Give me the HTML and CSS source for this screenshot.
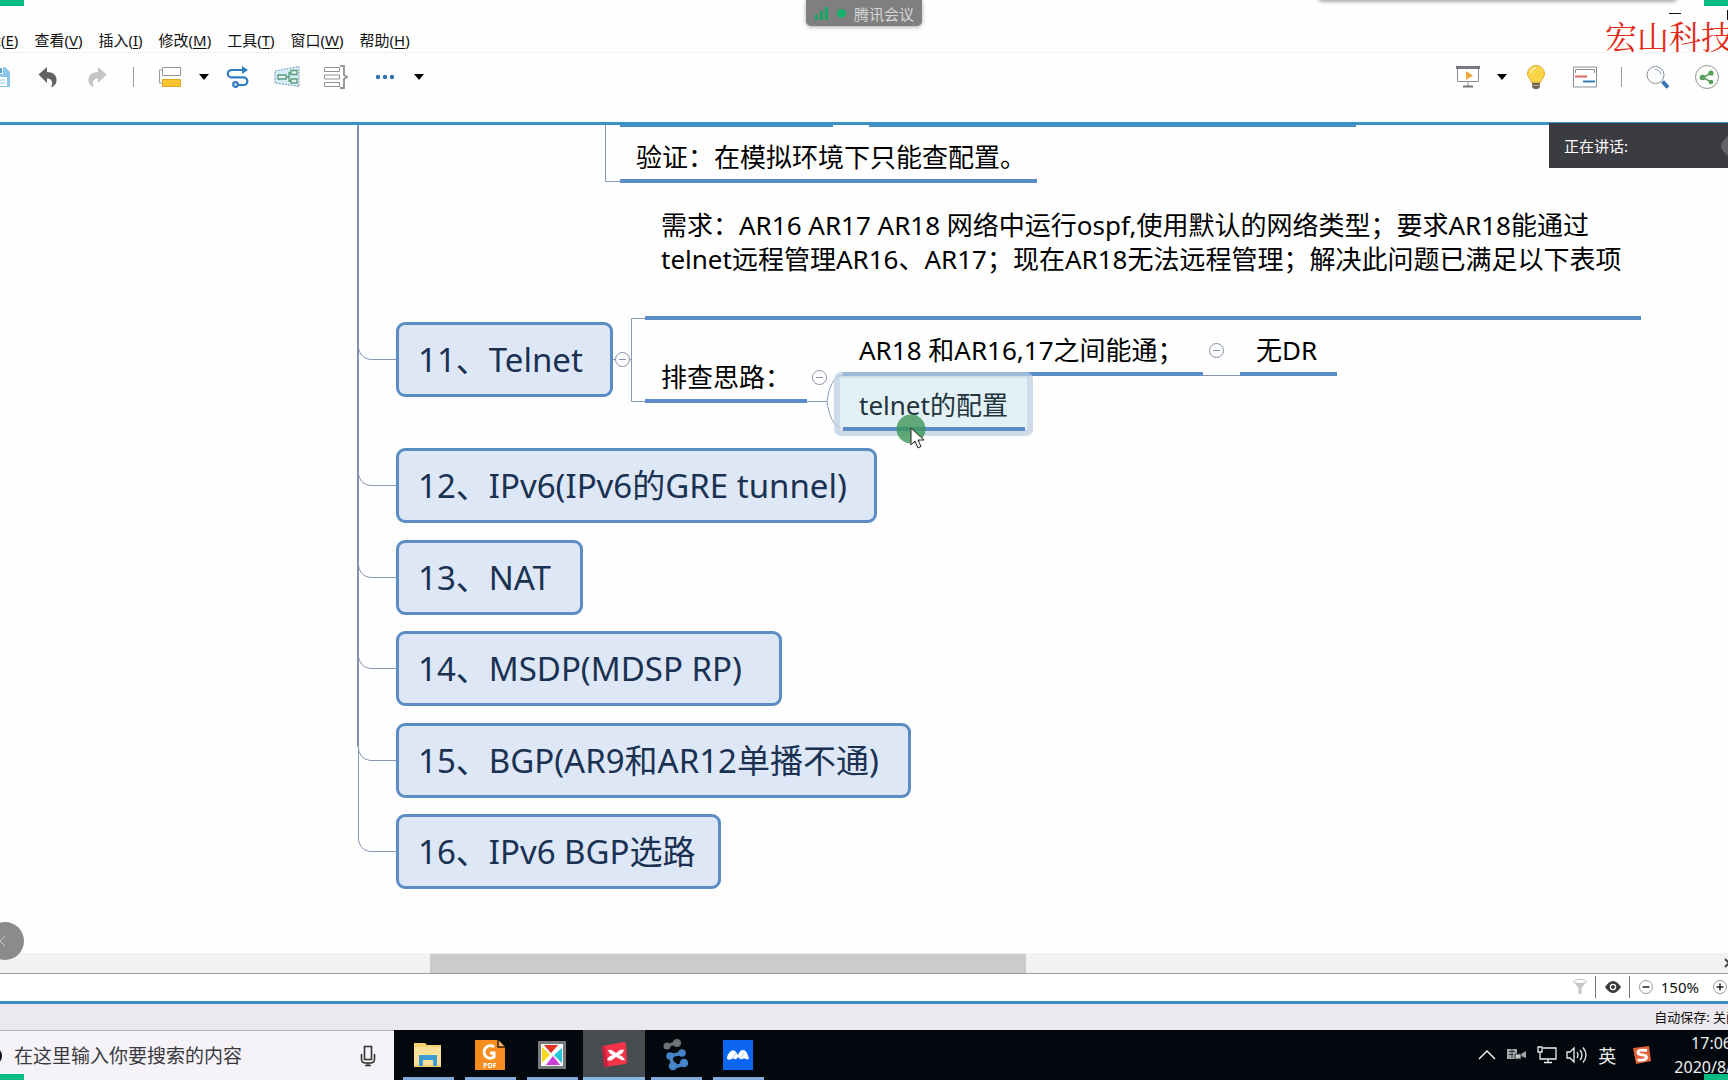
FILE: index.html
```
<!DOCTYPE html>
<html lang="zh-CN">
<head>
  <meta charset="UTF-8">
  <meta name="viewport" content="width=device-width, initial-scale=1.0">
  <title>思维导图</title>
  <link rel="stylesheet" href="styles.css">
</head>
<body>
  <header class="header">
    <nav class="menubar">
      <button>编辑(<u>E</u>)</button>
      <button>查看(<u>V</u>)</button>
      <button>插入(<u>I</u>)</button>
      <button>修改(<u>M</u>)</button>
      <button>工具(<u>T</u>)</button>
      <button>窗口(<u>W</u>)</button>
      <button>帮助(<u>H</u>)</button>
    </nav>

    <div class="toolbar">
      <div class="tools tools-left">
        <button class="tool" aria-label="保存">
          <svg width="24" height="24" viewBox="0 0 24 24"><path d="M1 2h17l5 5v15H1z" fill="#8ec5ec"/><path d="M6 2h10v7H6z" fill="#fff"/><path d="M13 3h2v5h-2z" fill="#5ea3d6"/><path d="M4 12h16v9H4z" fill="#fff"/><path d="M6 15h12M6 18h12" stroke="#8ec5ec"/></svg>
        </button>
        <button class="tool" aria-label="撤销">
          <svg width="24" height="24" viewBox="0 0 24 24"><path d="M2.500 9.500 11 2v5c7 0 10 4 9.500 9-.3 3-2.500 5.500-5.500 6.500 2-3.500 2-9-4-9V18z" fill="#626262"/></svg>
        </button>
        <button class="tool" aria-label="重做">
          <svg width="24" height="24" viewBox="0 0 24 24"><path d="M21.500 9.500 13 2v5C6 7 3 11 3.500 16c.3 3 2.500 5.500 5.500 6.500-2-3.500-2-9 4-9V18z" fill="#c4c4c4"/></svg>
        </button>
        <span class="tool-sep"></span>
        <button class="tool" aria-label="主题">
          <svg width="24" height="24" viewBox="0 0 24 24"><path d="M4.500 2.500h18v8h-18z" fill="#fff" stroke="#999"/><path d="M4 5H1.500v13H4" fill="none" stroke="#999"/><path d="M4.500 14.500h18v7h-18z" fill="#f9c531" stroke="#e0a820"/></svg>
        </button>
        <button class="tool-caret" aria-label="更多主题"><svg width="10" height="6" viewBox="0 0 10 6"><path d="M0 0h10L5 6z"/></svg></button>
        <button class="tool" aria-label="联系">
          <svg width="24" height="24" viewBox="0 0 24 24" fill="none" stroke="#2f7cc4" stroke-width="2.200"><path d="M17 5H5.500a3.700 3.700 0 0 0 0 7.400h12a3.700 3.700 0 0 1 0 7.600H12"/><circle cx="9.500" cy="19.500" r="2.300"/><path d="M16 1l6 4-6 4z" fill="#2f7cc4" stroke="none"/></svg>
        </button>
        <button class="tool" aria-label="外框">
          <svg width="26" height="24" viewBox="0 0 26 24"><path d="M1 6 25 1.500v20L1 18z" fill="#d7ecf6" stroke="#4f83ad" stroke-dasharray="1.500 1.500"/><g fill="#e7f5ec" stroke="#5a9a7c" stroke-width="1.300"><path d="M4 10h8v4H4zM17 5.500h6v4h-6zM17 14h6v4h-6z"/><path d="M12 12h3M17 7.500h-2v8.500h2" fill="none"/></g></svg>
        </button>
        <button class="tool" aria-label="概要">
          <svg width="26" height="24" viewBox="0 0 26 24" fill="none" stroke="#8d938d"><path d="M1.500 2.500h15v4h-15zM1.500 10h15v4h-15zM1.500 17.500h15v4h-15z"/><path d="M17 .8h4V10l3 2-3 2v9h-4" stroke-width="1.800"/></svg>
        </button>
        <button class="tool" aria-label="更多">
          <svg width="20" height="6" viewBox="0 0 20 6" fill="#3272b4"><circle cx="3" cy="3" r="2.200"/><circle cx="10" cy="3" r="2.200"/><circle cx="17" cy="3" r="2.200"/></svg>
        </button>
        <button class="tool-caret" aria-label="展开更多"><svg width="10" height="6" viewBox="0 0 10 6"><path d="M0 0h10L5 6z"/></svg></button>
      </div>

      <div class="tools tools-right">
        <button class="tool" aria-label="演示">
          <svg width="24" height="24" viewBox="0 0 24 24"><path d="M1.500 3v13.500h21V3M12 17v4" fill="#fff" stroke="#8b8b8b"/><path d="M0 1h24v3H0z" fill="#777780"/><path d="M7 21.500h10" stroke="#777" stroke-width="2"/><path d="M10 6l7 4.500-7 4.500z" fill="#efa93a"/></svg>
        </button>
        <button class="tool-caret" aria-label="演示选项"><svg width="10" height="6" viewBox="0 0 10 6"><path d="M0 0h10L5 6z"/></svg></button>
        <button class="tool" aria-label="头脑风暴">
          <svg width="20" height="26" viewBox="0 0 20 26"><path d="M10 1.500a8.500 8.500 0 0 0-8.500 8.500c0 4 3.500 5 4 8.500h9c.5-3.500 4-4.500 4-8.500A8.500 8.500 0 0 0 10 1.500z" fill="#f9d348" stroke="#dfae2c"/><path d="M5 9a5 5 0 0 1 5-5" stroke="#fff0a8" stroke-width="2" fill="none"/><path d="M6 19h8v4l-2 2H8l-2-2z" fill="#67645c"/><path d="M6 21.500h8" stroke="#bba66b"/></svg>
        </button>
        <button class="tool" aria-label="甘特图">
          <svg width="24" height="22" viewBox="0 0 24 22"><path d="M.5 1h23v20H.5z" fill="#fff" stroke="#8b8f94"/><path d="M2.500 7V3.500h19V7" fill="none" stroke="#8b8f94"/><path d="M2 10.500h12" stroke="#dc6767" stroke-width="2"/><path d="M10 15.500h12" stroke="#367eb6" stroke-width="2"/></svg>
        </button>
        <span class="tool-sep"></span>
        <button class="tool" aria-label="搜索">
          <svg width="24" height="24" viewBox="0 0 24 24"><circle cx="9.500" cy="10" r="8.500" fill="#fbfcfe" stroke="#8c9098"/><path d="M9 4.500c3.500 0 5.500 2 6 5" fill="none" stroke="#8fa7c0"/><path d="M16.500 16.500l5.500 6" stroke="#3575b5" stroke-width="4"/></svg>
        </button>
        <button class="tool" aria-label="分享">
          <svg width="24" height="24" viewBox="0 0 24 24"><circle cx="12" cy="12" r="11.500" fill="#fbfdfb" stroke="#8f9891"/><path d="M16 8 8 12.500l8 4.500" fill="none" stroke="#5a9e5e" stroke-width="1.500"/><g fill="#5a9e5e"><circle cx="16" cy="8" r="2.600"/><circle cx="7.500" cy="12.500" r="2.800"/><circle cx="16" cy="17" r="2.300"/></g></svg>
        </button>
      </div>
    </div>
  </header>

  <main class="canvas">
    <svg class="links" width="100%" height="100%" fill="none">
      <path class="trunk" d="M358 0V621"/>
      <g class="thin">
        <path d="M358.500 621v91"/>
        <path d="M358 220q1 13 12 14.500h28M358 346q1 13 12 14.500h28M358 438q1 13 12 14.500h28M358 529q1 13 12 14.500h28M358 621q1 13 12 14.500h28M358 712q1 13 12 14.500h28"/>
        <path d="M605.500 0v56.500H620"/>
        <path d="M613 234.500h18.500M645 193.500h-13.500v83H645"/>
        <path d="M807 276.500h20c2-14 6-25 16-27M827 276.500c2 14 6 25 16 27"/>
        <path d="M1203 250.500h37"/>
      </g>
      <path class="cut" d="M620 0h213M869 0h487"/>
    </svg>

    <div class="subtopic verify">验证：在模拟环境下只能查配置。</div>
    <div class="subtopic demand">需求：AR16 AR17 AR18 网络中运行ospf,使用默认的网络类型；要求AR18能通过<br>telnet远程管理AR16、AR17；现在AR18无法远程管理；解决此问题已满足以下表项</div>
    <div class="subtopic check">排查思路：</div>
    <div class="subtopic reach">AR18 和AR16,17之间能通；</div>
    <div class="subtopic nodr">无DR</div>
    <div class="selection"></div>
    <div class="subtopic config">telnet的配置</div>

    <div class="topic t11">11、Telnet</div>
    <div class="topic t12">12、IPv6(IPv6的GRE tunnel)</div>
    <div class="topic t13">13、NAT</div>
    <div class="topic t14">14、MSDP(MDSP RP)</div>
    <div class="topic t15">15、BGP(AR9和AR12单播不通)</div>
    <div class="topic t16">16、IPv6 BGP选路</div>

    <button class="fold fold-11" aria-label="折叠"></button>
    <button class="fold fold-check" aria-label="折叠"></button>
    <button class="fold fold-reach" aria-label="折叠"></button>

    <svg class="pointer" width="34" height="36" viewBox="0 0 34 36"><circle cx="15" cy="15" r="14.500" fill="#3f9658" fill-opacity=".8"/><path d="M15 14v17l4-4 3 7 3-1.500-3-6.500h6z" fill="#fff" stroke="#222"/></svg>

    <div class="speaking"><span>正在讲话:</span><svg width="8" height="22" viewBox="0 0 8 22"><path d="M8 1 3 6Q-1 11 3 16l5 5z" fill="#63646a"/></svg></div>
    <button class="side-handle" aria-label="收起"><svg width="8" height="12" viewBox="0 0 8 12"><path d="M7 1 2 6l5 5" fill="none" stroke="#c8c8c8"/></svg></button>
  </main>

  <div class="scrollbar">
    <div class="thumb"></div>
    <svg class="scroll-arrow" width="6" height="10" viewBox="0 0 6 10"><path d="M1 1l4 4-4 4" fill="none" stroke="#444" stroke-width="2"/></svg>
  </div>

  <div class="statusbar">
    <button aria-label="筛选"><svg width="14" height="16" viewBox="0 0 14 16"><path d="M.5 2.500 5.500 9v6h3V9l5-6.500z" fill="#c6c6c6"/><ellipse cx="7" cy="2.500" rx="6.500" ry="2" fill="#fff" stroke="#bdbdbd"/></svg></button>
    <span class="status-sep"></span>
    <button aria-label="显示"><svg width="16" height="12" viewBox="0 0 16 12"><path d="M0 6q8-12 16 0-8 12-16 0z" fill="#3b3b3f"/><circle cx="8" cy="6" r="3.200" fill="#fff"/><circle cx="8" cy="6" r="2" fill="#3b3b3f"/></svg></button>
    <span class="status-sep"></span>
    <button aria-label="缩小"><svg width="14" height="14" viewBox="0 0 14 14"><circle cx="7" cy="7" r="6.500" fill="#fff" stroke="#999"/><path d="M3.500 7h7" stroke="#222" stroke-width="1.500"/></svg></button>
    <span class="zoom-value">150%</span>
    <button aria-label="放大"><svg width="14" height="14" viewBox="0 0 14 14"><circle cx="7" cy="7" r="6.500" fill="#fff" stroke="#999"/><path d="M3.500 7h7M7 3.500v7" stroke="#222" stroke-width="1.500"/></svg></button>
  </div>

  <div class="savebar">自动保存: 关闭</div>

  <footer class="taskbar">
    <div class="search">
      <span class="search-ring"></span>
      <input type="text" aria-label="搜索" placeholder="在这里输入你要搜索的内容">
      <svg width="16" height="22" viewBox="0 0 16 22" fill="none" stroke="#333" stroke-width="1.600"><path d="M4.500 1.500h7v13h-7z"/><path d="M1.500 9v5q0 4 4 4h5q4 0 4-4V9M8 18v3M5 20.500h6"/></svg>
    </div>

    <div class="apps">
      <button class="app" aria-label="文件资源管理器">
        <svg width="30" height="30" viewBox="0 0 30 30"><path d="M1 3h11l2 2h14v22H1z" fill="#f3cf70"/><path d="M1 7h27v18H1z" fill="#fbe197"/><path d="M6 26V15h18v11h-4v-6H10v6z" fill="#3d9ed6"/></svg>
      </button>
      <button class="app" aria-label="PDF 阅读器">
        <svg width="30" height="30" viewBox="0 0 30 30"><path d="M0 0h23l7 7v23H0z" fill="#f78c20"/><path d="M23 0v7h7" fill="#ffb868" stroke="#3a1c00" stroke-width="1.500"/><path d="M19 7a6.200 6.200 0 1 0 0 10v-4h-4" fill="none" stroke="#fff" stroke-width="3"/><text x="15" y="28" text-anchor="middle" class="pdf-label">PDF</text></svg>
      </button>
      <button class="app" aria-label="视频">
        <svg width="28" height="30" viewBox="0 0 28 30"><path d="M0 1h28v28H0z" fill="#77797b"/><path d="M3 4h22v22H3z" fill="#f2f2f2"/><path d="M6 5h14l-7 8z" fill="#e0301e"/><path d="M4 7l8 8-8 8z" fill="#f6d81f"/><path d="M24 8v15l-8-8z" fill="#23c4dc"/><path d="M15 16l7 9H8z" fill="#ce3fd8"/><path d="M4 25 24 5" stroke="#fff" stroke-width="2.500"/></svg>
      </button>
      <button class="app active" aria-label="XMind">
        <svg width="30" height="30" viewBox="0 0 30 30"><path d="M3 6 25 2q2 0 2 2l1 18q0 2-2 2L7 27q-2 0-2-2z" fill="#f23348"/><path d="M3 6l3 1 3 19-4 1z" fill="#c8203a"/><path d="M9 10q3-1 5 1l3 2 4-3q2-1 4 0-1 4-5 5 4 1 6 5-3 1-5-1l-4-2-4 3q-2 1-5 0 1-4 6-5-4-1-5-5z" fill="#fff"/></svg>
      </button>
      <button class="app" aria-label="eNSP">
        <svg width="26" height="32" viewBox="0 0 26 32"><g stroke="#6f7275" stroke-width="3" fill="#777"><path d="M4 7l11-4"/><circle cx="4" cy="7" r="2"/><circle cx="14" cy="4" r="2.500"/></g><g stroke="#4583c6" stroke-width="3.500" fill="#69a6e2"><path d="M19 14 7 17l4 11 11-3" fill="none"/><circle cx="19" cy="14" r="2"/><circle cx="7" cy="17" r="2"/><circle cx="10" cy="27" r="2.500"/><circle cx="21" cy="24" r="2.500"/></g></svg>
      </button>
      <button class="app" aria-label="腾讯会议">
        <svg width="30" height="30" viewBox="0 0 30 30"><path d="M0 0h30v30H0z" fill="#0c66f2"/><path d="M4 19q0-5 4-8 3-2 5 1l2 3q2-5 5-5 4 0 6 9-3 1-5-1-3 3-6-1-2 4-5 1-3 3-6 1z" fill="#fff"/><path d="M9 19l4-6M18 18l3-5" stroke="#a9cbfb"/></svg>
      </button>
    </div>

    <div class="tray">
      <button aria-label="显示隐藏的图标"><svg width="18" height="10" viewBox="0 0 18 10"><path d="M1 9l8-8 8 8" fill="none" stroke="#eee" stroke-width="1.500"/></svg></button>
      <button aria-label="摄像头"><svg width="20" height="14" viewBox="0 0 20 14"><path d="M0 1h10v10H0zM14 6l5-3v7l-5-2z" fill="#a5a8ab"/><path d="M2 3.500h6M2 6.500h4M5 1v9M8 6h6v5H8z" stroke="#333" fill="#c4c4c4"/></svg></button>
      <button aria-label="网络"><svg width="20" height="18" viewBox="0 0 20 18" fill="none" stroke="#eee" stroke-width="1.300"><path d="M6 2h13v11H3V7M11 13v3M7 16.500h8M1 1h4v5H1z"/></svg></button>
      <button aria-label="音量"><svg width="22" height="18" viewBox="0 0 22 18" fill="none" stroke="#eee" stroke-width="1.300"><path d="M1 6h3l4-4v14l-4-4H1zM11 6q2 3 0 6M14 4q4 5 0 10M17 1.500q6 7.500 0 15"/></svg></button>
      <button class="ime">英</button>
      <button aria-label="搜狗输入法"><svg width="20" height="20" viewBox="0 0 20 20"><path d="M1 3 17 1l2 15-15 3z" fill="#e2603a"/><path d="M15 5.500Q6 4 6 7.500q0 2 4 2.300 5 .4 4.500 3-.5 3-9 2" fill="none" stroke="#fff" stroke-width="2.800"/></svg></button>
      <div class="clock">17:06<br>2020/8/</div>
    </div>
  </footer>

  <!-- 会议共享画面的浮层 -->
  <div class="meeting-badge">
    <svg width="14" height="13" viewBox="0 0 14 13" fill="#16a862"><path d="M0 8h3v5H0zM5 4h3v9H5zM10 0h3v13h-3z"/></svg>
    <span class="dot"></span>
    <span>腾讯会议</span>
  </div>
  <div class="top-shadow"></div>
  <svg class="win-buttons" width="60" height="12" viewBox="0 0 60 12"><path d="M1 4.500h12" stroke="#111"/><path d="M59.500 1v10" stroke="#111"/></svg>
  <div class="brand">宏山科技</div>
  <span class="corner top left"></span>
  <span class="corner top right"></span>
  <span class="corner bottom left"></span>
  <span class="corner bottom right"></span>
</body>
</html>
```

FILE: styles.css
```
* {
  box-sizing: border-box;
}

html, body {
  height: 100%;
  margin: 0;
  overflow: hidden;
}

body {
  position: relative;
  display: flex;
  flex-direction: column;
  background: #fefefe;
  color: #111;
  font-family: "Noto Sans", "Noto Sans CJK SC", sans-serif;
  font-size: 15px;
}

button {
  display: flex;
  align-items: center;
  justify-content: center;
  margin: 0;
  padding: 0;
  border: 0;
  background: none;
  color: inherit;
  font: inherit;
  white-space: nowrap;
}

/* 菜单和工具栏 */
.header {
  border-bottom: 3px solid #3993c6;
}

.menubar {
  display: flex;
  gap: 16px;
  margin-left: -29px;
  padding-top: 28px;
  height: 52px;
  line-height: 22px;
}

.menubar u {
  text-underline-offset: 2px;
}

.toolbar {
  display: flex;
  justify-content: space-between;
  height: 70px;
  padding-bottom: 22px;
  border-top: 1px solid #f3f3f3;
}

.tools {
  display: flex;
  align-items: center;
}

.tools-left {
  margin-left: -26px;
}

.tools-right {
  margin-right: -3px;
}

.tool {
  width: 49px;
}

.tool-caret {
  width: 19px;
}

.tool-sep {
  width: 1px;
  height: 20px;
  margin: 0 11px 0 12px;
  background: #9a9a9a;
}

/* 导图画布 */
.canvas {
  position: relative;
  flex: 1;
  min-height: 0;
}

.links {
  position: absolute;
  top: 0;
  left: 0;
}

.trunk {
  stroke: #7d93b3;
  stroke-width: 2;
}

.thin {
  stroke: #8799b5;
}

.cut {
  stroke: #4a8fcb;
  stroke-width: 4;
}

.topic {
  position: absolute;
  left: 396px;
  height: 75px;
  padding: 0 19px;
  border: 3px solid #5b8cc4;
  border-radius: 9px;
  background: #dde7f6;
  color: #1a3152;
  font-size: 33px;
  line-height: 70px;
  white-space: nowrap;
}

.t11 { top: 197px; width: 217px; }
.t12 { top: 323px; width: 481px; }
.t13 { top: 415px; width: 187px; }
.t14 { top: 506px; width: 386px; }
.t15 { top: 598px; width: 515px; }
.t16 { top: 689px; width: 325px; }

.subtopic {
  position: absolute;
  padding: 0 16px 5px;
  border-bottom: 4px solid #5b8cc8;
  color: #000;
  font-size: 26px;
  line-height: 34px;
  white-space: nowrap;
}

.verify { left: 620px; top: 15px; width: 417px; }
.demand { left: 645px; top: 83px; width: 996px; padding-bottom: 40px; }
.check { left: 645px; top: 235px; width: 162px; }
.reach { left: 843px; top: 208px; width: 360px; }
.nodr { left: 1240px; top: 208px; width: 97px; }
.config { left: 843px; top: 263px; width: 182px; color: #22343c; }

.selection {
  position: absolute;
  left: 834px;
  top: 247px;
  width: 199px;
  height: 64px;
  border: 6px solid rgba(185, 204, 222, 0.7);
  border-radius: 7px;
  background: rgba(222, 238, 245, 0.85);
  background-clip: padding-box;
}

.fold {
  position: absolute;
  width: 15px;
  height: 15px;
  border: 1px solid #8690ab;
  border-radius: 50%;
  background: #fefefe;
}

.fold::before {
  content: "";
  width: 7px;
  height: 1px;
  background: #8690ab;
}

.fold-11 { left: 615px; top: 227px; }
.fold-check { left: 812px; top: 245px; }
.fold-reach { left: 1209px; top: 218px; }

.pointer {
  position: absolute;
  left: 896px;
  top: 289px;
}

.speaking {
  position: absolute;
  top: -2px;
  right: 0;
  display: flex;
  align-items: center;
  justify-content: space-between;
  width: 179px;
  height: 45px;
  padding-left: 15px;
  background: #3b3c42;
  color: #fff;
}

.side-handle {
  position: absolute;
  left: -14px;
  bottom: -7px;
  z-index: 1;
  width: 38px;
  height: 38px;
  padding-right: 6px;
  border-radius: 50%;
  background: #8b8b8b;
}

.scrollbar {
  display: flex;
  align-items: center;
  justify-content: space-between;
  height: 21px;
  border-bottom: 1px solid #9c9ca0;
  background: #f2f2f3;
}

.thumb {
  width: 596px;
  height: 19px;
  margin-left: 430px;
  background: #cbcbcb;
}

.scroll-arrow {
  margin-right: -2px;
}

.statusbar {
  display: flex;
  align-items: center;
  justify-content: flex-end;
  height: 30px;
  padding: 0 1px 2px 0;
  border-bottom: 3px solid #3c8fba;
  background: #fff;
}

.status-sep {
  width: 1px;
  height: 22px;
  margin: 0 9px 0 8px;
  background: #777;
}

.zoom-value {
  margin: 0 14px 0 8px;
}

.savebar {
  height: 26px;
  margin-right: -11px;
  background: #ece9ee;
  font-size: 13px;
  line-height: 26px;
  text-align: right;
}

/* 任务栏 */
.taskbar {
  display: flex;
  height: 50px;
  background: #02080d;
}

.search {
  display: flex;
  align-items: center;
  width: 394px;
  padding-right: 18px;
  border-top: 1px solid #b5b3b8;
  background: #f5f3f8;
}

.search-ring {
  width: 18px;
  height: 18px;
  margin-left: -16px;
  border: 3px solid #111;
  border-radius: 50%;
}

.search input {
  flex: 1;
  min-width: 0;
  padding: 0 12px;
  border: 0;
  background: none;
  font: inherit;
  font-size: 19px;
}

.search input::placeholder {
  color: #3a3a3e;
}

.apps {
  display: flex;
  flex: 1;
  padding-left: 3px;
}

.app {
  position: relative;
  width: 62px;
}

.app::after {
  content: "";
  position: absolute;
  left: 6px;
  right: 5px;
  bottom: 0;
  height: 3px;
  background: #82aadb;
}

.app.active {
  background: #464c50;
}

.app.active::after {
  left: 0;
  right: 0;
  background: #84b8df;
}

.pdf-label {
  fill: #fff;
  font-size: 7px;
  font-weight: bold;
}

.tray {
  display: flex;
  align-items: center;
  margin-right: -4px;
  color: #eee;
}

.tray button {
  width: 30px;
}

.tray .ime {
  font-size: 18px;
}

.tray button:nth-child(6) {
  width: 40px;
}

.clock {
  margin-left: 12px;
  font-size: 16px;
  line-height: 24px;
  text-align: right;
}

/* 浮层 */
.meeting-badge {
  position: absolute;
  top: 0;
  left: 806px;
  display: flex;
  align-items: center;
  gap: 8px;
  width: 116px;
  height: 26px;
  padding-left: 9px;
  border-radius: 0 0 5px 5px;
  background: #807f80;
  box-shadow: 0 1px 4px #aaa;
  color: #d6d6d6;
}

.meeting-badge .dot {
  width: 9px;
  height: 9px;
  border-radius: 50%;
  background: #16b068;
}

.top-shadow {
  position: absolute;
  top: -4px;
  right: 53px;
  width: 355px;
  height: 4px;
  box-shadow: 0 0 4px 1px #888;
}

.win-buttons {
  position: absolute;
  top: 9px;
  right: 0;
}

.brand {
  position: absolute;
  top: 13px;
  left: 1605px;
  color: #e12a17;
  font-family: "Noto Serif CJK SC", "Noto Sans CJK SC", serif;
  font-size: 32px;
  line-height: 44px;
  white-space: nowrap;
}

.corner {
  position: absolute;
  width: 24px;
  height: 6px;
  background: #04bd84;
}

.top { top: 0; }
.bottom { bottom: 0; }
.left { left: 0; }
.right { right: 0; }
```
